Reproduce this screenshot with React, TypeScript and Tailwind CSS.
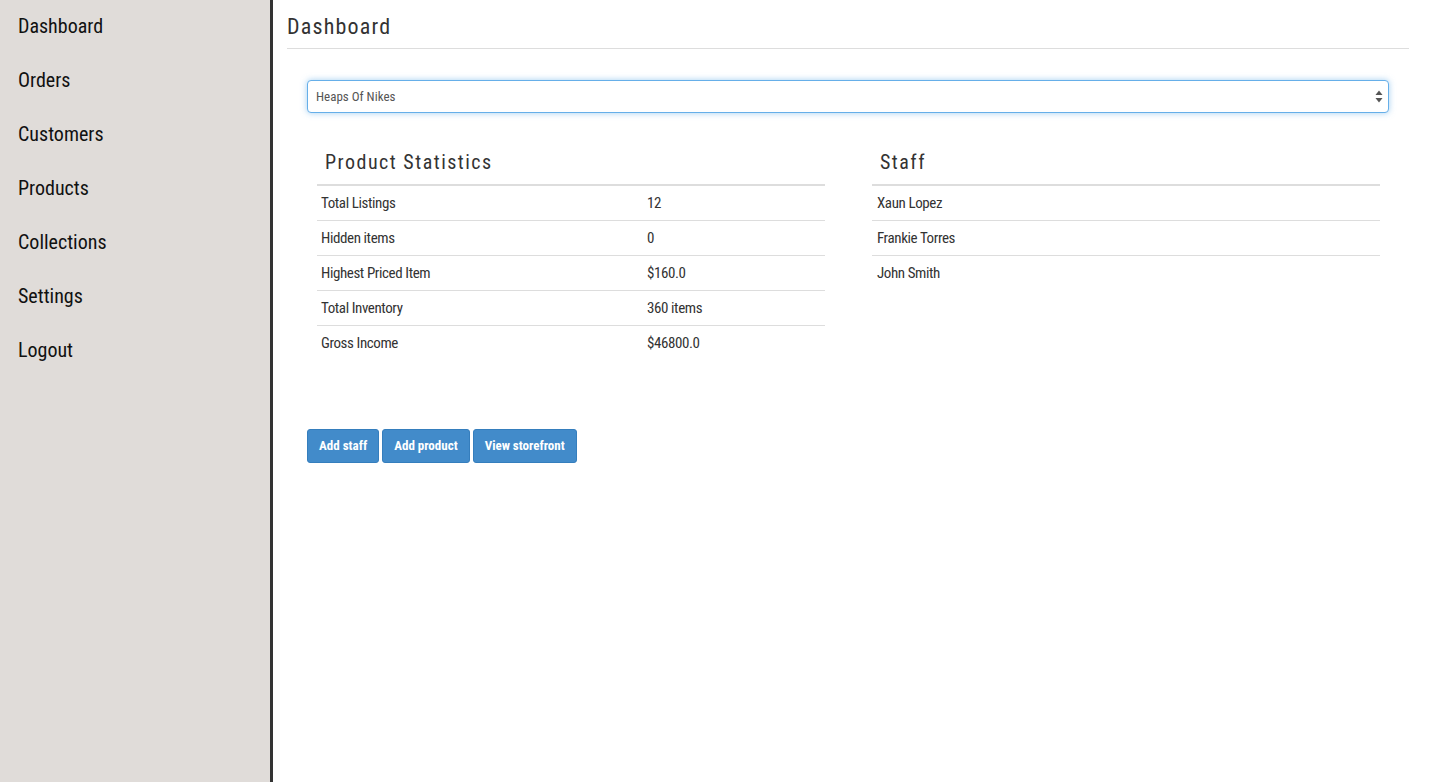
import React from 'react';

const font = "font-['Roboto_Condensed','Liberation_Sans',sans-serif]";

const navItems = ['Dashboard', 'Orders', 'Customers', 'Products', 'Collections', 'Settings', 'Logout'];

const stats = [
  ['Total Listings', '12'],
  ['Hidden items', '0'],
  ['Highest Priced Item', '$160.0'],
  ['Total Inventory', '360 items'],
  ['Gross Income', '$46800.0'],
];

const staff = ['Xaun Lopez', 'Frankie Torres', 'John Smith'];

function App(): JSX.Element {
  return (
    <div className={`flex h-[782px] w-full bg-white text-[#333] ${font}`}>
      <aside className="h-full w-[273px] shrink-0 border-r-[3px] border-[#333] bg-[#e0dcd9] pt-[12px]">
        <ul className="flex flex-col">
          {navItems.map((item) => (
            <li key={item} className="h-[54px] pl-[18px] text-[20px] leading-[28px] text-[#111]">
              <a href="#">{item}</a>
            </li>
          ))}
        </ul>
      </aside>

      <main className="flex-1 pl-[14px] pr-[27px]">
        <div className="border-b border-[#ddd] pt-[11px] pb-[5px]">
          <h1 className="text-[22px] leading-[32px] tracking-[1.2px] text-[#333]">Dashboard</h1>
        </div>

        <div className="pl-[20px] pr-[20px] pt-[31px]">
          <div className="relative">
            <select className="h-[33px] w-full appearance-none rounded-[4px] border border-[#66afe9] bg-white pl-[8px] text-[13px] text-[#555] shadow-[0_0_6px_rgba(102,175,233,0.6)] outline-none">
              <option>Heaps Of Nikes</option>
            </select>
            <svg className="pointer-events-none absolute right-[6px] top-[10px]" width="8" height="13" viewBox="0 0 8 13">
              <path d="M4 0.5 L7.5 5 H0.5 Z" fill="#555" />
              <path d="M4 12.5 L7.5 8 H0.5 Z" fill="#555" />
            </svg>
          </div>

          <div className="flex pt-[34px]">
            <section className="ml-[10px] w-[508px]">
              <h2 className="pl-[8px] text-[20px] leading-[30px] tracking-[1.5px] text-[#333]">Product Statistics</h2>
              <table className="mt-[7px] w-full border-t-2 border-[#ddd] text-[15px] tracking-[-0.4px]">
                <tbody>
                  {stats.map(([label, value], i) => (
                    <tr key={label} className={i < stats.length - 1 ? 'border-b border-[#ddd]' : ''}>
                      <td className="h-[35px] w-[330px] pl-[4px] pt-[1px] align-middle">{label}</td>
                      <td className="h-[35px] pt-[1px] align-middle">{value}</td>
                    </tr>
                  ))}
                </tbody>
              </table>
            </section>

            <section className="ml-[47px] w-[508px]">
              <h2 className="pl-[8px] text-[20px] leading-[30px] tracking-[1.5px] text-[#333]">Staff</h2>
              <table className="mt-[7px] w-full border-t-2 border-[#ddd] text-[15px] tracking-[-0.4px]">
                <tbody>
                  {staff.map((name, i) => (
                    <tr key={name} className={i < staff.length - 1 ? 'border-b border-[#ddd]' : ''}>
                      <td className="h-[35px] pl-[5px] pt-[1px] align-middle">{name}</td>
                    </tr>
                  ))}
                </tbody>
              </table>
            </section>
          </div>

          <div className="flex gap-[3px] pt-[69px]">
            {['Add staff', 'Add product', 'View storefront'].map((label) => (
              <button
                key={label}
                className="h-[34px] rounded-[3px] border border-[#357ebd] bg-[#428bca] px-[11px] text-[13px] font-bold text-white"
              >
                {label}
              </button>
            ))}
          </div>
        </div>
      </main>
    </div>
  );
}

export default App;
